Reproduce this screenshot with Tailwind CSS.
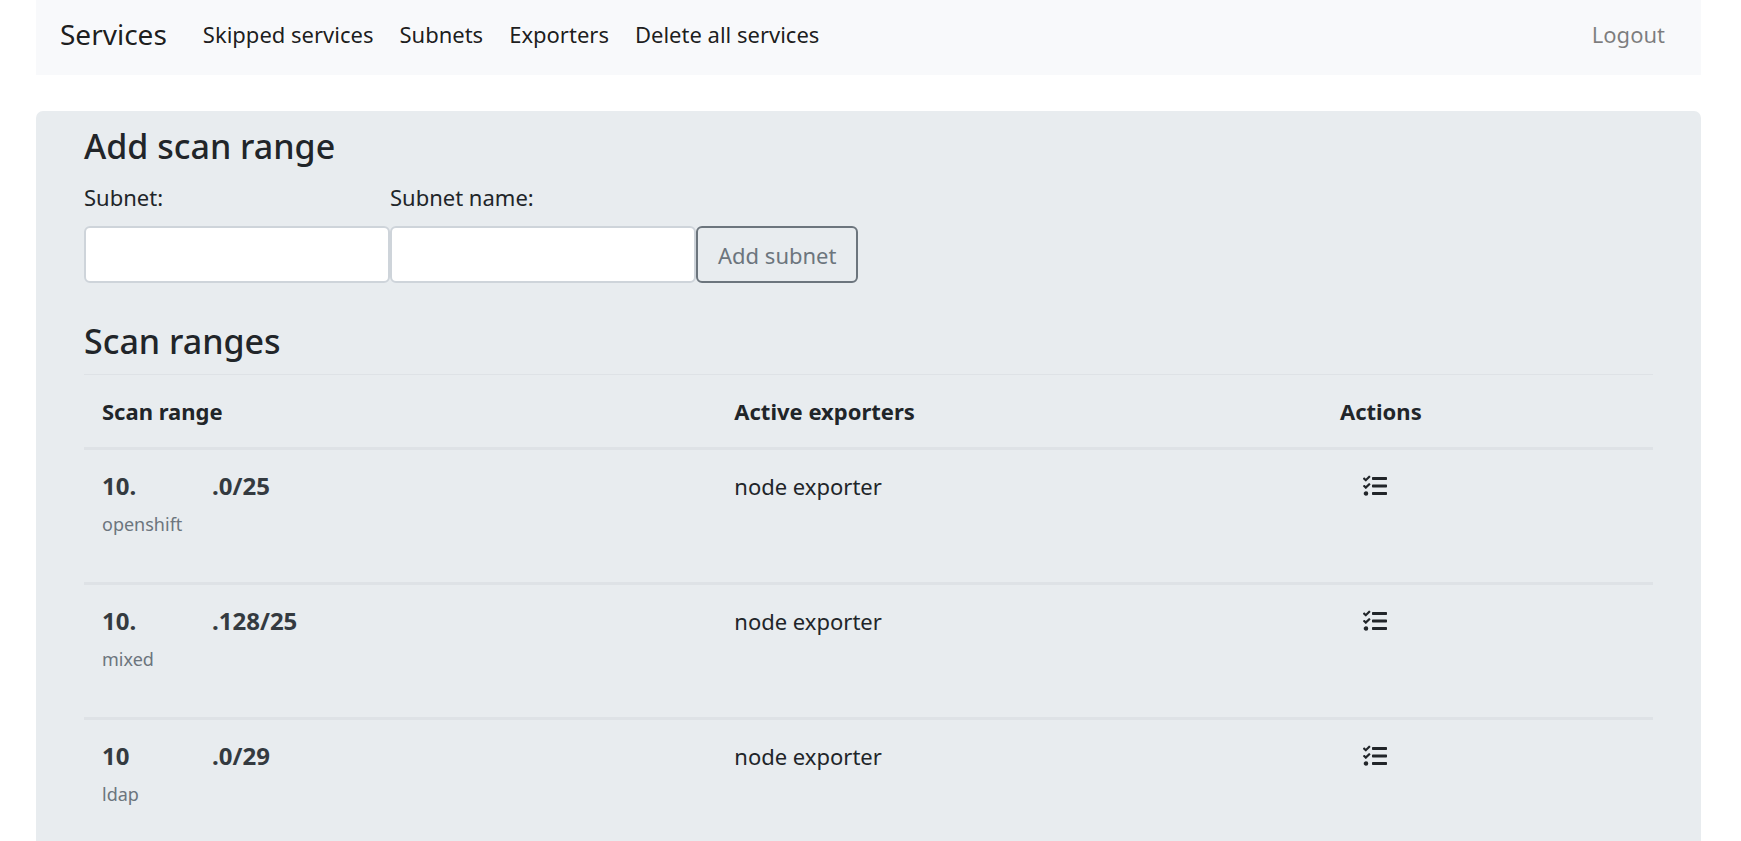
<!DOCTYPE html>
<html lang="en">
<head>
<meta charset="utf-8">
<meta name="viewport" content="width=device-width, initial-scale=1">
<title>Subnets</title>
<script src="https://cdn.jsdelivr.net/npm/@tailwindcss/browser@4"></script>
</head>
<body class="flex h-screen flex-col overflow-hidden bg-white pr-10 pl-9 font-['Noto_Sans','Open_Sans',sans-serif] text-[22px] leading-9 text-[#212529]">
<svg class="hidden" aria-hidden="true">
  <symbol id="tasks" viewBox="0 0 512 512"><path d="M139.61 35.5a12 12 0 0 0-17 0L58.93 98.81l-22.7-22.12a12 12 0 0 0-17 0L3.53 92.41a12 12 0 0 0 0 17l47.59 47.4a12.78 12.78 0 0 0 17.61 0l15.59-15.62L156.52 69a12.09 12.09 0 0 0 .09-17zm0 159.19a12 12 0 0 0-17 0l-63.68 63.72-22.7-22.1a12 12 0 0 0-17 0L3.53 252a12 12 0 0 0 0 17L51 316.5a12.77 12.77 0 0 0 17.6 0l15.7-15.69 72.2-72.22a12 12 0 0 0 .09-16.9zM64 368c-26.49 0-48.59 21.5-48.59 48S37.53 464 64 464a48 48 0 0 0 0-96zm432 16H208a16 16 0 0 0-16 16v32a16 16 0 0 0 16 16h288a16 16 0 0 0 16-16v-32a16 16 0 0 0-16-16zm0-320H208a16 16 0 0 0-16 16v32a16 16 0 0 0 16 16h288a16 16 0 0 0 16-16V80a16 16 0 0 0-16-16zm0 160H208a16 16 0 0 0-16 16v32a16 16 0 0 0 16 16h288a16 16 0 0 0 16-16v-32a16 16 0 0 0-16-16z"/></symbol>
</svg>
<nav class="flex shrink-0 items-center bg-[#f8f9fb] pt-4 pr-9 pb-[23px] pl-6 text-black/90">
  <a href="#" class="mr-9 text-[28px]">Services</a>
  <div class="flex grow gap-[26px]">
    <a href="#">Skipped services</a>
    <a href="#">Subnets</a>
    <a href="#">Exporters</a>
    <a href="#">Delete all services</a>
  </div>
  <a href="#" class="text-black/50">Logout</a>
</nav>
<main class="mt-9 grow rounded-t-[7px] bg-[#e8ecef] px-12 pt-[13px]">
  <h1 class="text-[34px] leading-11 font-medium">Add scan range</h1>
  <form class="mt-[11px] flex items-end">
    <div class="flex w-[306px] flex-col gap-[11px]">
      <label for="subnet">Subnet:</label>
      <input id="subnet" type="text" class="h-[57px] w-full rounded-md border-2 border-[#ced4da] bg-white px-4">
    </div>
    <div class="flex w-[306px] flex-col gap-[11px]">
      <label for="name">Subnet name:</label>
      <input id="name" type="text" class="h-[57px] w-full rounded-md border-2 border-[#ced4da] bg-white px-4">
    </div>
    <button type="button" class="h-[57px] rounded-md border-2 border-[#6c757d] px-5 text-[#6c757d]">Add subnet</button>
  </form>
  <h2 class="mt-9 text-[34px] leading-11 font-medium">Scan ranges</h2>
  <table class="mt-[11px] w-full table-fixed border-separate border-spacing-0 text-left">
    <colgroup><col class="w-[40.3%]"><col class="w-[38.6%]"><col></colgroup>
    <thead>
      <tr class="*:border-t *:border-b-3 *:border-[#dee2e6] *:p-[18px] *:font-bold">
        <th scope="col">Scan range</th><th scope="col">Active exporters</th><th scope="col">Actions</th>
      </tr>
    </thead>
    <tbody class="align-top">
      <tr class="h-[135px] *:border-b-3 *:border-[#dee2e6] *:p-[18px]">
        <td><div class="flex text-2xl/9 font-bold text-[#343a40]"><span class="w-[110px]">10.</span><span>.0/25</span></div><div class="mt-1 text-lg/8 text-[#6c757d]">openshift</div></td>
        <td>node exporter</td>
        <td><button type="button" aria-label="Edit exporters" class="flex h-9 items-center px-[23px]"><svg class="size-6 fill-current"><use href="#tasks"/></svg></button></td>
      </tr>
      <tr class="h-[135px] *:border-b-3 *:border-[#dee2e6] *:p-[18px]">
        <td><div class="flex text-2xl/9 font-bold text-[#343a40]"><span class="w-[110px]">10.</span><span>.128/25</span></div><div class="mt-1 text-lg/8 text-[#6c757d]">mixed</div></td>
        <td>node exporter</td>
        <td><button type="button" aria-label="Edit exporters" class="flex h-9 items-center px-[23px]"><svg class="size-6 fill-current"><use href="#tasks"/></svg></button></td>
      </tr>
      <tr class="h-[135px] *:border-b-3 *:border-[#dee2e6] *:p-[18px]">
        <td><div class="flex text-2xl/9 font-bold text-[#343a40]"><span class="w-[110px]">10</span><span>.0/29</span></div><div class="mt-1 text-lg/8 text-[#6c757d]">ldap</div></td>
        <td>node exporter</td>
        <td><button type="button" aria-label="Edit exporters" class="flex h-9 items-center px-[23px]"><svg class="size-6 fill-current"><use href="#tasks"/></svg></button></td>
      </tr>
    </tbody>
  </table>
</main>
</body>
</html>
